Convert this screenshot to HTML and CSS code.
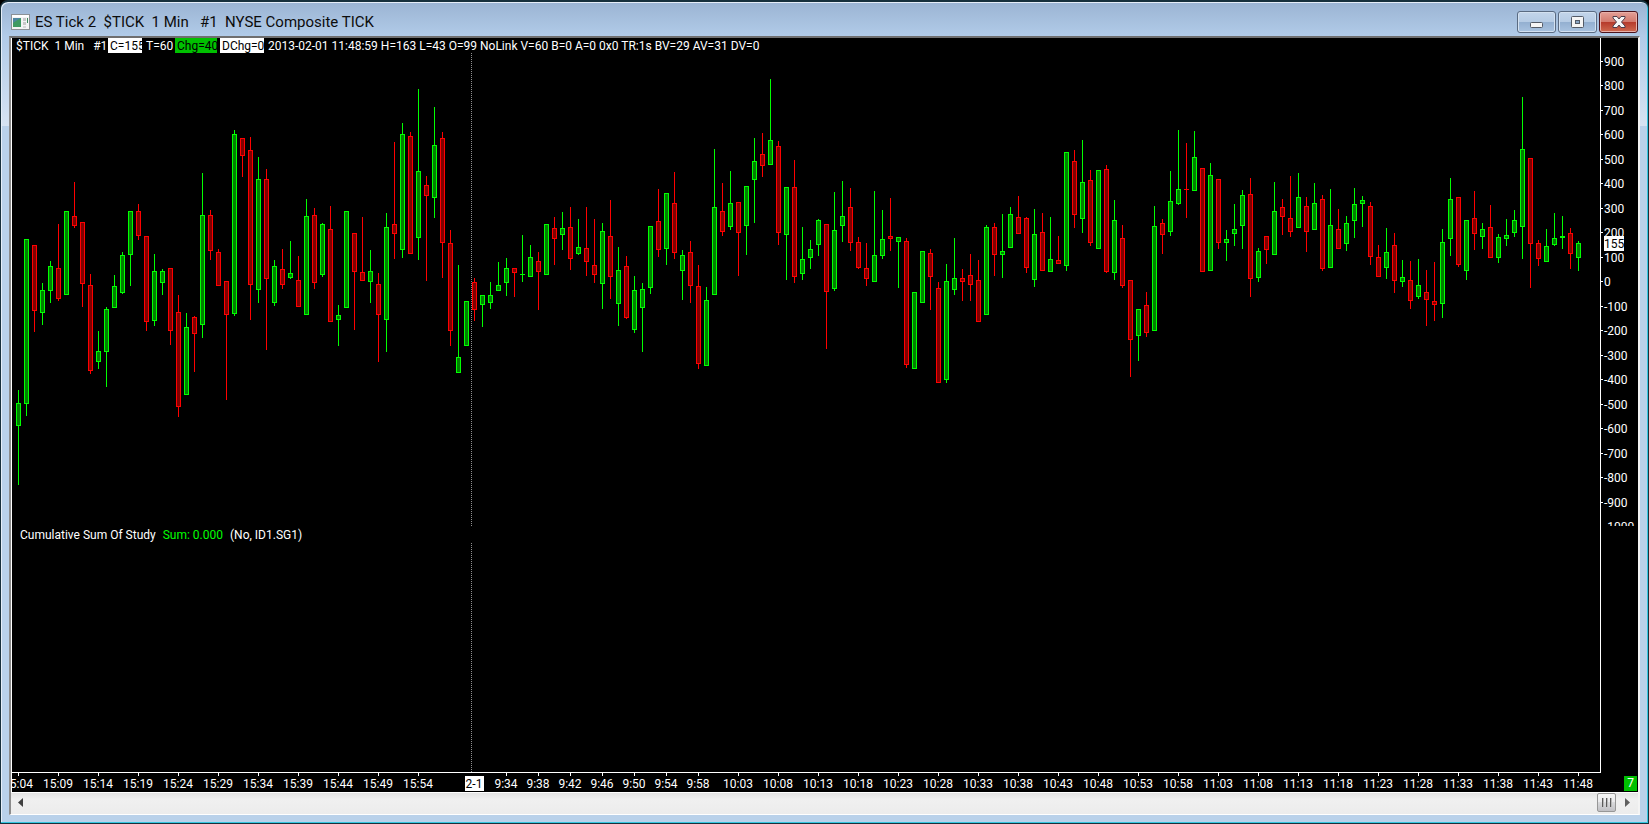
FILE: index.html
```html
<!DOCTYPE html>
<html lang="en">
<head>
    <meta charset="UTF-8">
    <meta name="viewport" content="width=device-width, initial-scale=1.0">
    <title>ES Tick 2 $TICK 1 Min #1 NYSE Composite TICK</title>
    <link rel="stylesheet" href="styles.css">
</head>
<body>
<div class="window">
    <header class="titlebar">
        <svg class="app-icon" width="20" height="16" viewBox="0 0 20 16" aria-hidden="true">
            <rect x="0.5" y="0.5" width="18" height="15" fill="#f4f4f4" stroke="#8c9196"/>
            <rect x="1" y="1" width="17" height="2" fill="#ffffff"/>
            <rect x="2" y="4" width="8" height="9" fill="#4d86a0"/>
            <path d="M2 13V9l3-2 5-3v9z" fill="#3f9a62"/>
            <rect x="12" y="4" width="3" height="3" fill="#c9c9c9"/>
            <rect x="12" y="8" width="3" height="3" fill="#c9c9c9"/>
            <rect x="12" y="12" width="3" height="2" fill="#d8d8d8"/>
            <rect x="16" y="4" width="1" height="5" fill="#3c8a5c"/>
        </svg>
        <h1 class="title">ES Tick 2  $TICK  1 Min   #1  NYSE Composite TICK</h1>
        <div class="window-buttons">
            <button type="button" class="window-button minimize" aria-label="Minimize">
                <svg width="13" height="6" viewBox="0 0 13 6"><rect x="0.5" y="0.5" width="12" height="5" rx="1" fill="#f5f5f5" stroke="#535a66"/></svg>
            </button>
            <button type="button" class="window-button" aria-label="Maximize">
                <svg width="13" height="12" viewBox="0 0 13 12"><rect x="0.5" y="0.5" width="12" height="11" rx="1" fill="#f5f5f5" stroke="#535a66"/><rect x="4.5" y="4.5" width="4" height="3" fill="#88a5c4" stroke="#535a66"/></svg>
            </button>
            <button type="button" class="window-button close" aria-label="Close">
                <svg width="14" height="12" viewBox="0 0 14 12"><path d="M1 .5H5L7 3 9 .5H13V2L9.500 6 13 10V11.500H9L7 9 5 11.500H1V10L4.500 6 1 2z" fill="#f5f5f5" stroke="#4c3d4a"/></svg>
            </button>
        </div>
    </header>

    <main class="client">
        <div class="chart">
            <section class="pane price-pane">
                <div class="readout">
                    <span class="symbol">$TICK  1 Min   #1</span>
                    <span class="box close-box">C=155</span>
                    <span class="trades">T=60</span>
                    <span class="box change-box">Chg=40</span>
                    <span class="box day-box">DChg=0</span>
                    <span>2013-02-01 11:48:59 H=163 L=43 O=99 NoLink V=60 B=0 A=0 0x0 TR:1s BV=29 AV=31 DV=0</span>
                </div>
                <svg class="plot" id="bars"></svg>
            </section>
            <svg class="price-axis" id="price-axis"></svg>

            <section class="pane study-pane">
                <div class="study-readout">
                    <span>Cumulative Sum Of Study</span>
                    <span class="sum">Sum: 0.000</span>
                    <span>(No, ID1.SG1)</span>
                </div>
                <svg class="plot" id="study"></svg>
            </section>
            <div class="study-axis"></div>

            <svg class="time-axis" id="time-axis"></svg>
            <div class="axis-corner"><span class="badge">7</span></div>
        </div>

        <div class="scrollbar">
            <button type="button" class="scroll-arrow" aria-label="Scroll left">
                <svg width="5" height="9" viewBox="0 0 5 9"><path d="M5 0v9L0 4.500z" fill="#404040"/></svg>
            </button>
            <div class="scroll-track"></div>
            <button type="button" class="scroll-thumb" aria-label="Scroll position"><i></i><i></i><i></i></button>
            <button type="button" class="scroll-arrow" aria-label="Scroll right">
                <svg width="5" height="9" viewBox="0 0 5 9"><path d="M0 0v9l5-4.500z" fill="#606060"/></svg>
            </button>
        </div>
    </main>
</div>
<script src="chart.js"></script>
</body>
</html>
```
FILE: styles.css
```css
body {
    margin: 0;
    background-color: #000;
    font-family: Roboto, "Open Sans", sans-serif;
    font-size: 12px;
    color: #fff;
}

button {
    margin: 0;
    padding: 0;
    border: none;
    background: none;
    cursor: pointer;
}

.window {
    box-sizing: border-box;
    min-height: 100vh;
    display: flex;
    flex-direction: column;
    padding: 0 8px 8px;
    border: 1px solid #17303c;
    border-top-width: 2px;
    border-radius: 8px 8px 0 0;
    background: linear-gradient(#9bb4d3, #b1cbe8 34px, #d6e3f2 124px, #b9d1ea 124px);
    box-shadow: inset -1px -1px 0 #35c6e0, inset 1px 1px 0 #e6eef8;
}

.titlebar {
    box-sizing: border-box;
    height: 34px;
    display: flex;
    align-items: center;
    padding: 6px 2px 0;
}

.app-icon {
    margin-right: 4px;
}

.title {
    margin: 0;
    flex: 1;
    font-size: 15px;
    font-weight: normal;
    line-height: 20px;
    white-space: pre;
    color: #0c0c0c;
}

.window-buttons {
    display: flex;
    gap: 2px;
}

.window-button {
    box-sizing: border-box;
    width: 39px;
    height: 22px;
    display: flex;
    align-items: center;
    justify-content: center;
    border: 1px solid #5a6b82;
    border-radius: 3px;
    background: linear-gradient(#c3d5ea, #b5cbe4 50%, #93afd0 50%, #a9c3e0);
    box-shadow: inset 0 0 0 1px #d3e1f0;
}

.window-button.minimize {
    padding-top: 6px;
}

.window-button.close {
    border-color: #4c141c;
    background: linear-gradient(#e4a097, #d2796c 50%, #b5392a 50%, #cf6a50);
    box-shadow: inset 0 0 0 1px #e8b0a8;
}

.client {
    flex: 1;
    display: flex;
    flex-direction: column;
    border-top: 2px solid #6f6f6f;
    border-left: 2px solid #8c8c8c;
    border-right: 2px solid #f4f4f4;
    border-bottom: 1px solid #fff;
}

.chart {
    flex: 1;
    display: grid;
    grid-template-columns: 1fr 37px;
    grid-template-rows: 488px 1fr 19px;
    border-left: 1px solid #fff;
    background-color: #000;
}

.pane {
    display: flex;
    flex-direction: column;
    border-right: 1px solid #fff;
}

.study-pane {
    border-bottom: 1px solid #fff;
}

.readout {
    display: flex;
    height: 15px;
    padding-left: 4px;
    line-height: 16px;
    white-space: pre;
}

.symbol {
    width: 92px;
}

.box {
    overflow: hidden;
    padding-left: 2px;
    background-color: #fff;
    color: #000;
}

.close-box {
    width: 32px;
    margin-right: 4px;
}

.trades {
    width: 29px;
}

.change-box {
    width: 40px;
    margin-right: 3px;
    background-color: #00c000;
}

.day-box {
    width: 42px;
    margin-right: 4px;
}

.study-readout {
    display: flex;
    gap: 7px;
    height: 17px;
    padding-left: 8px;
    line-height: 18px;
}

.sum {
    color: #00ff00;
}

.plot {
    display: block;
    width: 100%;
    height: 100%;
    flex: 1;
    min-height: 0;
}

.price-axis,
.time-axis {
    display: block;
    width: 100%;
    height: 100%;
    overflow: hidden;
}

.price-axis text,
.time-axis text {
    fill: #fff;
    font-size: 12px;
}

.price-axis .last-text,
.time-axis .day-text {
    fill: #000;
}

.tick,
.marker {
    fill: #fff;
}

.up {
    fill: #008000;
    stroke: #00ff00;
}

.down {
    fill: #800000;
    stroke: #ff0000;
}

.session {
    stroke: #909090;
    stroke-dasharray: 1 1;
}

.axis-corner {
    display: flex;
    justify-content: flex-end;
    align-items: flex-end;
    padding: 0 1px 1px 0;
}

.badge {
    width: 13px;
    line-height: 15px;
    text-align: center;
    background-color: #00c000;
}

.scrollbar {
    display: flex;
    height: 19px;
    padding: 0 2px 2px 1px;
    border-top: 1px solid #fff;
    background: linear-gradient(#e3e3e3, #f0f0f0 30%, #ececec);
}

.scroll-arrow {
    width: 17px;
    display: flex;
    align-items: center;
    justify-content: center;
}

.scroll-track {
    flex: 1;
}

.scroll-thumb {
    box-sizing: border-box;
    width: 19px;
    margin-right: 3px;
    display: flex;
    align-items: center;
    justify-content: center;
    gap: 2px;
    border: 1px solid #979797;
    border-radius: 2px;
    background: linear-gradient(#f5f5f5, #e9e9eb 50%, #d9dadc 50%, #c0c0c4);
}

.scroll-thumb i {
    width: 2px;
    height: 9px;
    background: linear-gradient(90deg, #5a5a5a 50%, #b8b8b8 50%);
}
```
FILE: chart.js
```js
const SVG = 'http://www.w3.org/2000/svg';
const STEP = 8;
const FIRST_X = 6;

// direction, high, body top, body bottom, low
const bars = `
u 330 343 366 425|u 179 179 344 356|d 185 185 251 272|u 223 230 253 265|u 201 206 231 243|d 164 208 239 241
u 151 151 235 235|d 122 156 166 168|d 162 162 224 247|d 214 225 311 314|u 271 291 302 309|u 247 249 292 327
u 215 226 248 248|u 192 195 233 234|u 151 151 195 226|d 144 151 176 180|d 176 176 262 271|u 194 211 261 266
u 209 211 223 235|d 208 208 271 285|d 235 252 347 357|u 253 267 335 335|d 256 257 274 312|u 113 155 265 278
d 150 155 191 200|d 189 192 226 226|d 221 221 255 340|u 70 74 254 256|d 78 78 96 117|d 77 90 225 260
u 97 119 230 243|d 109 119 219 290|u 200 206 243 246|d 189 209 225 229|u 181 213 218 219|d 196 220 247 247
u 139 156 255 255|d 148 155 223 229|u 163 164 215 217|d 146 169 262 262|u 245 255 260 286|u 151 151 248 248
d 173 173 212 270|d 157 212 221 221|u 190 211 222 243|d 213 224 255 302|u 153 167 260 292|d 82 164 174 199
u 63 74 190 198|d 72 76 194 194|u 29 111 178 200|d 116 125 136 221|u 47 85 138 158|d 72 78 183 218
d 170 183 271 286|u 205 297 313 313|u 241 241 286 286|d 218 222 250 261|u 235 235 245 267|u 222 235 243 249
u 202 225 231 231|u 198 208 223 236|d 208 208 213 237|u 175 214 215 222|u 185 197 217 217|d 192 201 212 250
u 164 164 215 215|d 157 168 179 205|u 152 168 175 190|d 147 167 199 210|u 159 187 194 195|d 147 188 202 216
d 159 205 215 223|u 163 171 224 249|d 140 176 217 239|u 187 210 244 266|d 196 206 258 259|u 216 230 270 273
u 223 229 248 292|u 166 166 228 234|d 129 161 190 197|u 133 133 189 205|d 112 143 193 199|u 190 195 211 240
d 181 192 226 243|d 205 226 304 309|u 227 240 306 306|u 89 147 235 235|d 123 151 172 176|u 111 143 167 170
d 142 142 173 216|u 126 126 166 195|u 78 101 120 163|d 73 94 106 117|u 19 80 105 105|d 81 86 173 185
u 127 127 175 220|d 100 127 217 223|u 167 199 214 220|u 180 189 198 209|u 159 160 185 196|d 164 164 232 289
u 132 170 229 231|u 121 156 166 182|d 128 147 183 191|d 177 182 208 209|d 183 208 219 226|u 131 195 222 222
u 150 179 196 199|d 138 176 179 191|u 177 177 182 228|d 178 181 305 308|u 232 232 309 309|u 191 191 243 243
d 189 193 217 250|d 222 228 323 323|u 204 221 320 323|u 178 218 230 235|d 209 218 222 241|d 194 215 225 241
d 200 220 262 262|u 165 167 255 255|d 163 167 195 216|u 154 191 195 218|u 147 154 188 188|d 136 157 174 174
d 157 158 208 213|u 149 174 220 227|d 153 172 211 211|u 157 199 212 212|d 176 200 204 204|u 92 92 206 211
d 90 101 155 168|u 80 122 159 173|d 110 120 183 186|u 110 110 189 189|d 105 109 212 213|u 140 160 213 220
d 165 178 226 228|d 220 220 280 317|u 249 249 276 301|d 232 245 273 277|u 146 166 271 271|d 159 163 175 194
u 111 141 172 176|u 70 129 144 145|d 83 129 130 158|u 71 97 131 131|d 108 108 212 212|u 103 115 211 211
d 119 119 183 189|u 170 179 183 201|u 144 169 174 186|u 130 135 166 189|d 118 134 219 237|u 188 191 218 222
d 176 176 190 204|u 122 151 195 195|d 139 147 157 175|d 116 158 172 177|u 113 137 168 168|d 137 146 172 192
u 123 143 170 170|d 135 139 209 211|u 129 165 208 208|d 149 169 189 189|u 156 163 184 191|u 128 144 161 178
u 136 140 144 167|d 142 146 197 205|d 185 197 217 217|u 168 192 208 219|d 173 185 221 233|u 200 217 222 227
d 201 220 241 249|u 199 225 237 239|d 210 232 240 266|d 202 241 245 261|u 169 182 244 258|u 118 139 179 196
d 137 137 205 207|u 160 160 211 220|d 131 158 174 190|u 163 169 177 189|d 145 167 198 198|u 174 177 198 203
u 159 175 179 186|u 150 160 173 177|u 37 89 167 199|d 98 98 184 228|d 180 183 199 206|u 169 186 202 202
u 153 178 185 186|u 156 176 178 189|d 168 173 194 209|u 181 183 198 211
`.trim().split(/[|\n]/).map(row => row.split(' '));

function add(parent, name, attrs, text) {
    const el = document.createElementNS(SVG, name);
    for (const key in attrs) {
        el.setAttribute(key, attrs[key]);
    }
    if (text !== undefined) {
        el.textContent = text;
    }
    parent.appendChild(el);
    return el;
}

// Session divider between the two trading days
function drawSession(svg) {
    add(svg, 'line', { class: 'session', x1: 459.5, x2: 459.5, y1: 0, y2: 600 });
}

function drawBars() {
    const svg = document.getElementById('bars');
    const top = 7;
    bars.forEach(([dir, ...values], i) => {
        const [high, bodyTop, bodyBottom, low] = values.map(v => Number(v) + top);
        const x = FIRST_X + i * STEP;
        const group = add(svg, 'g', { class: dir === 'u' ? 'up' : 'down' });
        add(group, 'line', { x1: x + 0.5, x2: x + 0.5, y1: high, y2: low });
        if (bodyBottom - bodyTop < 2) {
            add(group, 'line', { x1: x - 2, x2: x + 3, y1: bodyTop + 0.5, y2: bodyTop + 0.5 });
        } else {
            add(group, 'rect', { x: x - 1.5, y: bodyTop + 0.5, width: 4, height: bodyBottom - bodyTop - 1 });
        }
    });
    drawSession(svg);
}

function drawPriceAxis() {
    const svg = document.getElementById('price-axis');
    for (let price = 900; price >= -1000; price -= 100) {
        const y = Math.floor(243.5 - price * 0.245);
        if (price > -1000) {
            add(svg, 'rect', { class: 'tick', x: 0, y: y, width: 2, height: 1 });
        }
        add(svg, 'text', { x: 3, y: y + 5 }, price);
    }
    add(svg, 'rect', { class: 'marker', x: 3, y: 198, width: 20, height: 15 });
    add(svg, 'text', { class: 'last-text', x: 3, y: 210 }, '155');
}

function drawTimeAxis() {
    const svg = document.getElementById('time-axis');
    const label = (index, text) => {
        const x = FIRST_X + index * STEP;
        add(svg, 'rect', { class: 'tick', x: x, y: 0, width: 1, height: 3 });
        add(svg, 'text', { x: x, y: 15, 'text-anchor': 'middle' }, text);
    };
    const clock = minutes => Math.floor(minutes / 60) + ':' + String(minutes % 60).padStart(2, '0');

    for (let i = 0; i <= 50; i += 5) {
        label(i, clock(904 + i));
    }
    for (let i = 61; i <= 85; i += 4) {
        label(i, clock(513 + i));
    }
    for (let i = 90; i <= 195; i += 5) {
        label(i, clock(513 + i));
    }

    const x = FIRST_X + 57 * STEP;
    add(svg, 'rect', { class: 'marker', x: x - 9, y: 3, width: 19, height: 15 });
    add(svg, 'text', { class: 'day-text', x: x, y: 15, 'text-anchor': 'middle' }, '2-1');
}

drawBars();
drawSession(document.getElementById('study'));
drawPriceAxis();
drawTimeAxis();
```
